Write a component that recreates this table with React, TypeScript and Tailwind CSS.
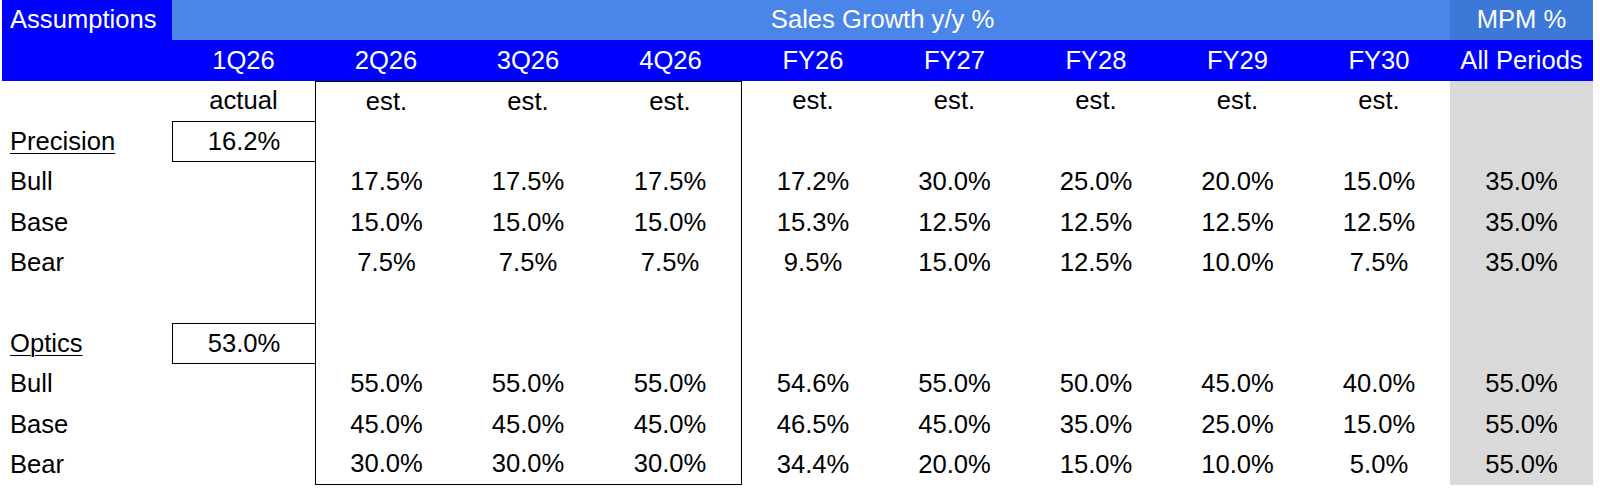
import React from 'react';

const widths = [
    'w-[143px]',
    'w-[142px]',
    'w-[142px]',
    'w-[143px]',
    'w-[142px]',
    'w-[141px]',
    'w-[142px]',
    'w-[141px]',
    'w-[142px]',
    'w-[143px]',
];

const periods = ['1Q26', '2Q26', '3Q26', '4Q26', 'FY26', 'FY27', 'FY28', 'FY29', 'FY30', 'All Periods'];
const kinds = ['actual', 'est.', 'est.', 'est.', 'est.', 'est.', 'est.', 'est.', 'est.', ''];

type Row = { label: string; section?: boolean; values: string[] };

const rows: Row[] = [
    { label: '', values: kinds },
    { label: 'Precision', section: true, values: ['16.2%', '', '', '', '', '', '', '', '', ''] },
    { label: 'Bull', values: ['', '17.5%', '17.5%', '17.5%', '17.2%', '30.0%', '25.0%', '20.0%', '15.0%', '35.0%'] },
    { label: 'Base', values: ['', '15.0%', '15.0%', '15.0%', '15.3%', '12.5%', '12.5%', '12.5%', '12.5%', '35.0%'] },
    { label: 'Bear', values: ['', '7.5%', '7.5%', '7.5%', '9.5%', '15.0%', '12.5%', '10.0%', '7.5%', '35.0%'] },
    { label: '', values: ['', '', '', '', '', '', '', '', '', ''] },
    { label: 'Optics', section: true, values: ['53.0%', '', '', '', '', '', '', '', '', ''] },
    { label: 'Bull', values: ['', '55.0%', '55.0%', '55.0%', '54.6%', '55.0%', '50.0%', '45.0%', '40.0%', '55.0%'] },
    { label: 'Base', values: ['', '45.0%', '45.0%', '45.0%', '46.5%', '45.0%', '35.0%', '25.0%', '15.0%', '55.0%'] },
    { label: 'Bear', values: ['', '30.0%', '30.0%', '30.0%', '34.4%', '20.0%', '15.0%', '10.0%', '5.0%', '55.0%'] },
];

function cellClass(col: number, row: number, section?: boolean) {
    let c = 'h-full flex items-center justify-center border-black ' + widths[col];
    if (col === 0 && section) c += ' border-t border-b border-l';
    if (col === 1) c += ' border-l';
    if (col === 3) c += ' border-r';
    if (row === 0 && col >= 1 && col <= 3) c += ' border-t';
    if (row === rows.length - 1 && col >= 1 && col <= 3) c += ' border-b';
    if (col === 9) c += ' bg-[#d9d9d9]';
    return c;
}

export default function App() {
    return (
        <div
            className="w-[1600px] h-[491px] bg-white pl-[2px] text-[25.6px] text-black leading-none"
            style={{ fontFamily: '"Liberation Sans", Arial, sans-serif' }}
        >
            <div className="flex flex-row h-[40px] text-white">
                <div className="w-[170px] h-full flex items-center pl-2 bg-[#0000ff]">Assumptions</div>
                <div className="w-[1278px] h-full flex items-center justify-center pl-[143px] bg-[#4a86e8]">
                    Sales Growth y/y %
                </div>
                <div className="w-[143px] h-full flex items-center justify-center bg-[#3c78d8]">MPM %</div>
            </div>
            <div className="flex flex-row h-[41px] w-[1591px] bg-[#0000ff] text-white">
                <div className="w-[170px] h-full" />
                {periods.map((p, i) => (
                    <div key={p} className={'h-full flex items-center justify-center ' + widths[i]}>
                        {p}
                    </div>
                ))}
            </div>
            {rows.map((r, ri) => (
                <div key={ri} className="flex flex-row h-[40.4px]">
                    <div className="w-[170px] h-full flex items-center pl-2">
                        <span className={r.section ? 'underline underline-offset-[3px] decoration-1' : ''}>
                            {r.label}
                        </span>
                    </div>
                    {r.values.map((v, ci) => (
                        <div key={ci} className={cellClass(ci, ri, r.section)}>
                            {v}
                        </div>
                    ))}
                </div>
            ))}
        </div>
    );
}
